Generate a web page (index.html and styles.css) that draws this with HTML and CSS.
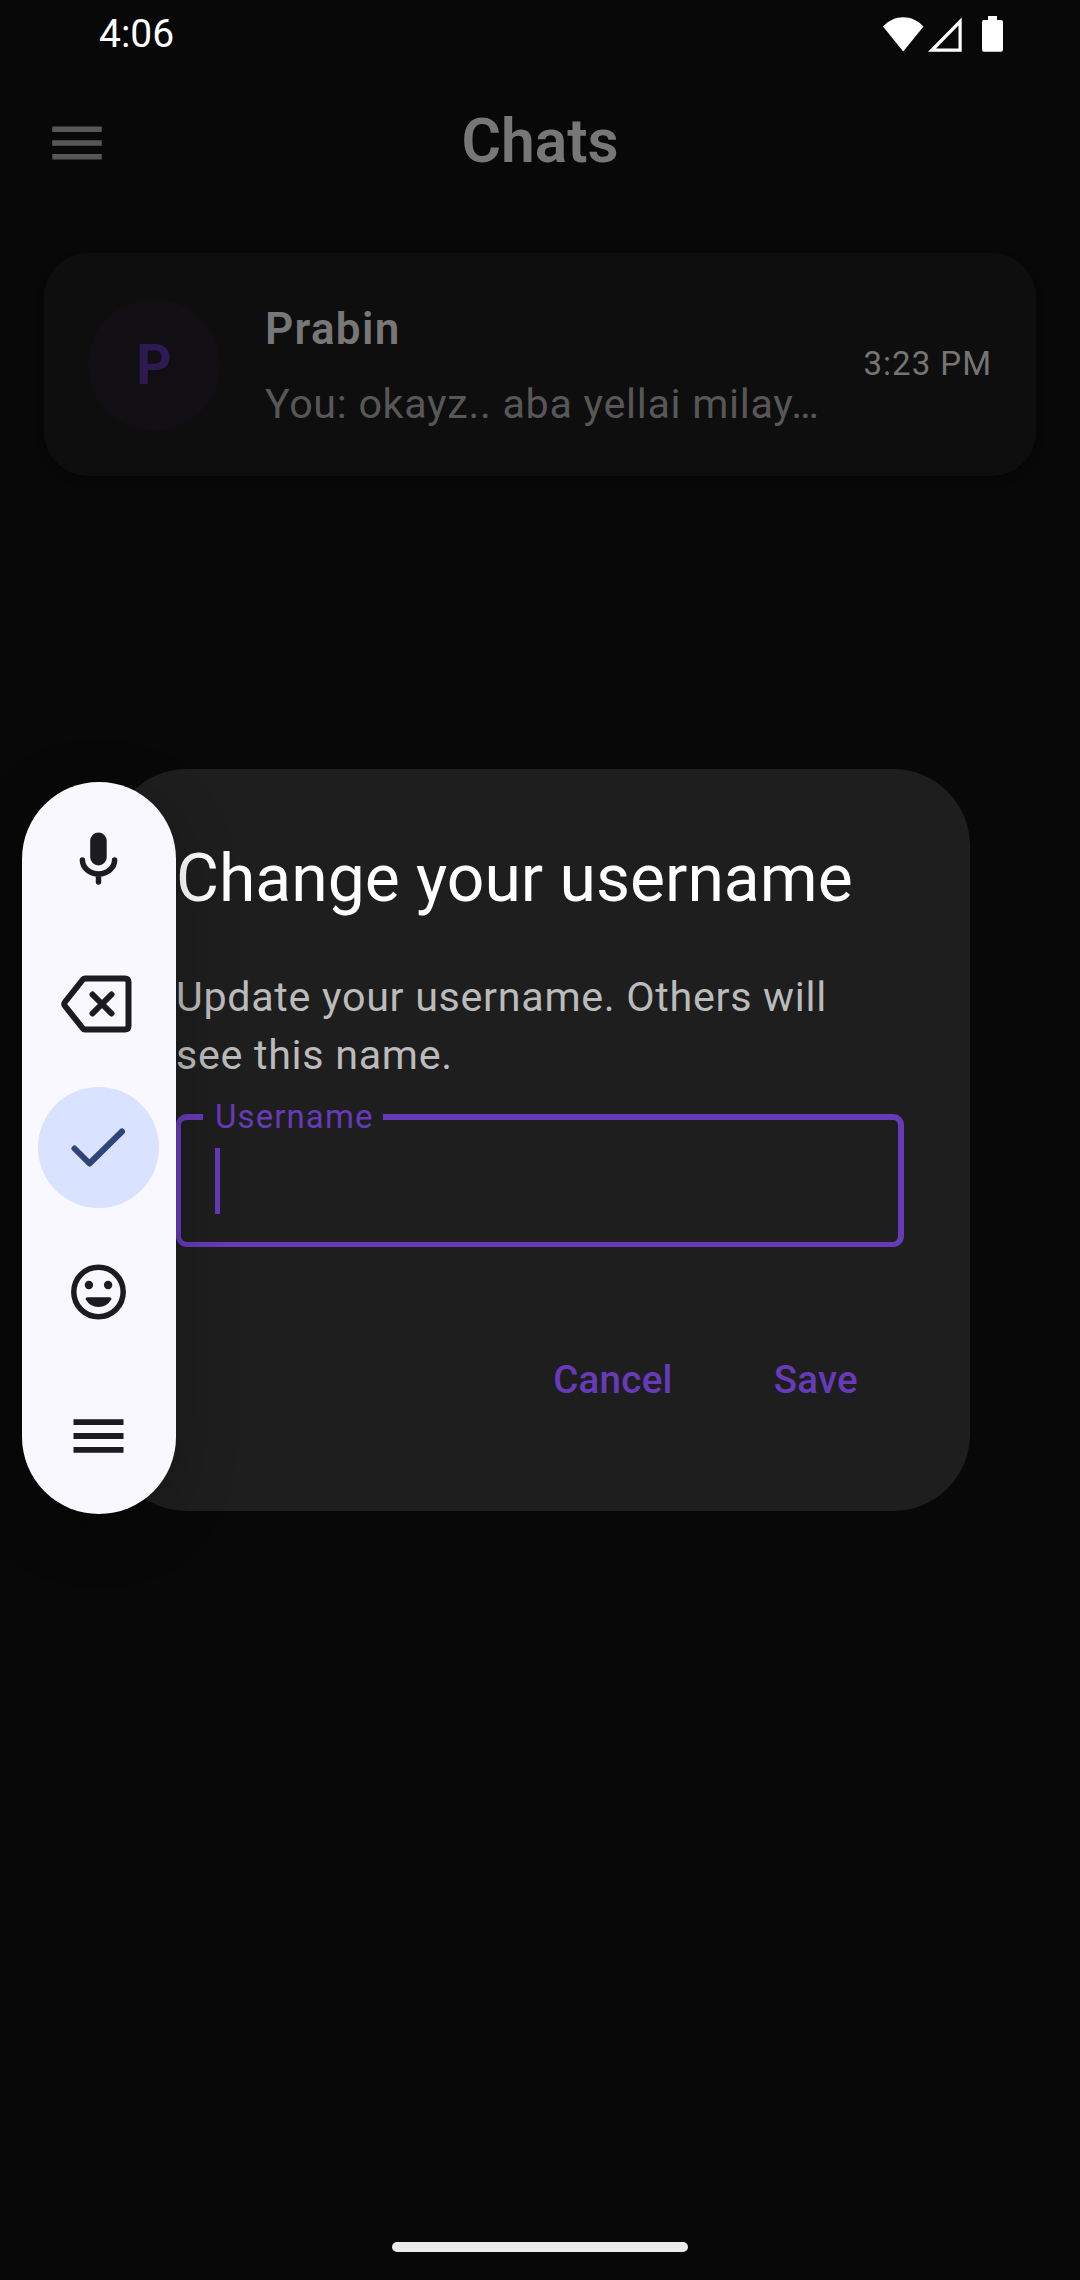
FILE: index.html
```html
<!DOCTYPE html>
<html lang="en">
<head>
<meta charset="utf-8">
<title>Chats</title>
<link rel="stylesheet" href="styles.css">
</head>
<body>
<div class="screen">
  <header class="status-bar">
    <span class="clock">4:06</span>
    <svg class="status-icons" width="122" height="38" viewBox="0 0 122 38" fill="#fff">
      <path d="M0 11.5C5.500 5.500 12.500 2.200 20.200 2.200S35 5.500 40.500 11.500L20.200 36.500Z"/>
      <path fill-rule="evenodd" d="M45 36.700L78.700 2.500V36.700ZM53 33.500H75.500V10.500Z"/>
      <path d="M105 1H114V5H118Q120 5 120 7V34.500Q120 36.800 118 36.800H101Q99 36.800 99 34.500V7Q99 5 101 5H105Z"/>
    </svg>
  </header>
  <div class="app-bar">
    <svg class="menu-icon" width="66" height="66" viewBox="0 0 24 24" fill="#575757"><path d="M3 18h18v-2H3v2zm0-5h18v-2H3v2zm0-7v2h18V6H3z"/></svg>
    <h1 class="app-title">Chats</h1>
  </div>
  <main class="chat-list">
    <article class="chat-card">
      <div class="avatar">P</div>
      <div class="chat-text">
        <div class="chat-name">Prabin</div>
        <div class="chat-preview">You: okayz.. aba yellai milay…</div>
      </div>
      <time class="chat-time">3:23 PM</time>
    </article>
  </main>
  <div class="home-indicator"></div>

  <div class="dialog-layer">
    <section class="dialog">
      <h2 class="dialog-title">Change your username</h2>
      <p class="dialog-body">Update your username. Others will<br>see this name.</p>
      <fieldset class="field">
        <legend class="field-label">Username</legend>
        <div class="caret"></div>
      </fieldset>
      <div class="dialog-actions">
        <button class="text-button">Cancel</button>
        <button class="text-button">Save</button>
      </div>
    </section>
  </div>

  <nav class="input-toolbar">
    <div class="tool">
      <svg width="66" height="66" viewBox="0 0 66 66" fill="none" stroke="#1b1b21" stroke-width="5.500" stroke-linecap="round"><rect x="25.200" y="6.500" width="16.500" height="33" rx="8.250" fill="#1b1b21" stroke="none"/><path d="M17.400 34a16.100 14 0 0 0 32.200 0M33.500 48.500v7.500"/></svg>
    </div>
    <div class="tool">
      <svg width="74" height="66" viewBox="0 0 74 66" fill="none" stroke="#1b1b21" stroke-width="6" stroke-linecap="round" stroke-linejoin="round"><path d="M24 8.500H64Q67.500 8.500 67.500 12V56Q67.500 59.500 64 59.500H24Q22.500 59.500 21.500 58L4 36Q2.500 34 4 32L21.500 10Q22.500 8.500 24 8.500ZM31.500 24.500L50.500 43.500M50.500 24.500L31.500 43.500"/></svg>
    </div>
    <div class="tool tool-active">
      <svg width="66" height="66" viewBox="0 0 66 66" fill="none" stroke="#2f4578" stroke-width="6" stroke-linecap="round" stroke-linejoin="round"><path d="M9.500 33.500L24.500 48.500L57 16.500"/></svg>
    </div>
    <div class="tool">
      <svg width="66" height="66" viewBox="0 0 66 66" fill="#1b1b21"><circle cx="33.500" cy="33" r="24.700" fill="none" stroke="#1b1b21" stroke-width="5.500"/><circle cx="23.900" cy="26" r="4.200"/><circle cx="43.100" cy="26" r="4.200"/><path d="M23 38.300H44Q47 38.300 46.200 40.500Q42 48 33.500 48T20.800 40.500Q20 38.300 23 38.300Z"/></svg>
    </div>
    <div class="tool">
      <svg width="66" height="66" viewBox="0 0 66 66" fill="#1b1b21"><path d="M8.500 15.200h50v5.800h-50zM8.500 29.100h50v5.800h-50zM8.500 43h50v5.800h-50z"/></svg>
    </div>
  </nav>
</div>
</body>
</html>
```
FILE: styles.css
```css
* { box-sizing: border-box; }

body {
  margin: 0;
  background: #080808;
  font-family: Roboto, "Liberation Sans", sans-serif;
}

.screen {
  position: relative;
  display: flex;
  flex-direction: column;
  width: 1080px;
  height: 2280px;
  overflow: hidden;
  background: #080808;
}

.status-bar {
  display: flex;
  justify-content: space-between;
  align-items: center;
  height: 66px;
  padding: 0 75px 0 99px;
  color: #fff;
}

.clock {
  padding-top: 2px;
  font-size: 39px;
  line-height: 66px;
}

.status-icons { margin-top: 2px; }

.app-bar {
  display: grid;
  grid-template-columns: 66px 1fr 66px;
  align-items: center;
  height: 154px;
  padding: 0 44px;
}

.menu-icon { display: block; }

.app-title {
  margin: 0;
  padding-bottom: 2px;
  text-align: center;
  font-size: 60.5px;
  font-weight: 600;
  line-height: 72px;
  color: #777;
}

.chat-list {
  flex: 1;
  padding: 33px 44px 0;
}

.chat-card {
  display: flex;
  align-items: center;
  height: 223px;
  padding: 0 44px;
  border-radius: 44px;
  background: #0e0e0e;
  box-shadow: 0 4px 8px rgba(0, 0, 0, .2);
}

.avatar {
  flex: none;
  width: 132px;
  height: 132px;
  border-radius: 50%;
  background: #110e14;
  color: #2e1a52;
  font-size: 55px;
  font-weight: 700;
  line-height: 132px;
  text-align: center;
}

.chat-text {
  flex: 1;
  margin-left: 45px;
  white-space: nowrap;
}

.chat-name {
  font-size: 44px;
  font-weight: 600;
  line-height: 66px;
  letter-spacing: 1.3px;
  color: #777;
}

.chat-preview {
  margin-top: 12px;
  font-size: 41.25px;
  line-height: 60px;
  letter-spacing: .6875px;
  color: #575757;
}

.chat-time {
  padding-bottom: 2px;
  font-size: 33px;
  letter-spacing: 1px;
  color: #757575;
}

.home-indicator {
  align-self: center;
  width: 296px;
  height: 10px;
  margin-bottom: 28px;
  border-radius: 5px;
  background: #ebebeb;
}

.dialog-layer {
  position: absolute;
  inset: 0;
  display: flex;
  align-items: center;
  justify-content: center;
}

.dialog {
  display: flex;
  flex-direction: column;
  width: 860px;
  height: 742px;
  padding: 66px;
  border-radius: 77px;
  background: #1e1e1e;
}

.dialog-title {
  margin: 0;
  font-size: 66px;
  font-weight: 400;
  line-height: 88px;
  color: #fff;
}

.dialog-body {
  margin: 45px 0 0;
  font-size: 41.25px;
  line-height: 58px;
  letter-spacing: .6875px;
  color: #bbb;
  white-space: nowrap;
}

.field {
  height: 156px;
  min-width: 0;
  margin: 11px 0 0;
  padding: 0 33px 0 34px;
  border: solid #673ab7;
  border-width: 6px 6px 5px 5px;
  border-radius: 11px;
}

.field-label {
  height: 44px;
  margin-left: -12px;
  padding: 0 9px 0 12px;
  font-size: 33px;
  line-height: 44px;
  letter-spacing: 1.1px;
  color: #673ab7;
}

.caret {
  width: 5px;
  height: 66px;
  margin-top: 9px;
  background: #673ab7;
}

.dialog-actions {
  display: flex;
  justify-content: flex-end;
  gap: 35px;
  margin-top: 66px;
  padding-right: 13px;
}

.text-button {
  height: 132px;
  padding: 0 33px;
  border: 0;
  background: none;
  color: #673ab7;
  font-family: inherit;
  font-size: 38.5px;
  font-weight: 500;
  letter-spacing: .275px;
}

.input-toolbar {
  position: absolute;
  left: 22px;
  top: 782px;
  display: flex;
  flex-direction: column;
  align-items: flex-start;
  gap: 23.5px;
  width: 154px;
  height: 732px;
  padding: 16px 0 0 16px;
  border-radius: 77px;
  background: #faf8ff;
  box-shadow: 0 16px 60px rgba(0, 0, 0, .25);
}

.tool {
  display: flex;
  flex: none;
  align-items: center;
  justify-content: center;
  width: 121px;
  height: 121px;
  padding-right: 1px;
  border-radius: 50%;
}

.tool-active { background: #d9e2ff; }
```
